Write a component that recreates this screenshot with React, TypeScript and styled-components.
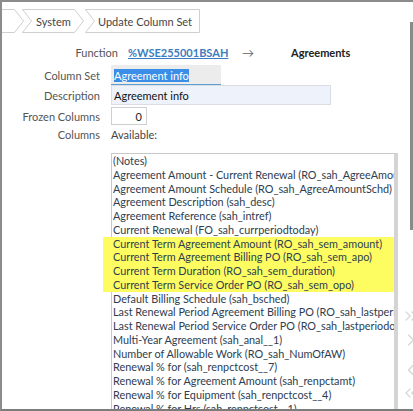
import React from "react";
import styled, { createGlobalStyle } from "styled-components";
import { ChevronRight, ChevronLeft, ChevronsRight, ChevronsLeft } from "lucide-react";

const Global = createGlobalStyle`
  html, body { margin: 0; padding: 0; background: #fff; }
  body { font-family: Lato, "Noto Sans", "Liberation Sans", sans-serif; }
`;

const Frame = styled.div`
  position: relative;
  box-sizing: border-box;
  width: 413px;
  height: 411px;
  border-top: 2px solid #8c8c8c;
  border-left: 2px solid #8c8c8c;
  border-bottom: 2px solid #7c7c7c;
  overflow: hidden;
  background: #fff;
  font-size: 11px;
`;

const PageThumb = styled.div`
  position: absolute;
  right: 0;
  top: 20px;
  width: 3px;
  height: 208px;
  background: #8a8a8a;
`;

const Crumbs = styled.nav`
  display: flex;
  height: 24px;
  margin: 7px 0 0 -10px;
`;

const Crumb = styled.div<{ $w: number; $gap: number; $pad: number }>`
  position: relative;
  flex: none;
  box-sizing: border-box;
  width: ${(p) => p.$w}px;
  margin-right: ${(p) => p.$gap}px;
  padding-left: ${(p) => p.$pad}px;
  display: flex;
  align-items: center;
  font-size: 11px;
  color: #454545;
  white-space: nowrap;
`;

const CrumbOutline = styled.svg`
  position: absolute;
  left: 0;
  top: 0;
  overflow: visible;
`;

const CrumbText = styled.span`
  position: relative;
`;

function BreadCrumb({ w, gap, pad, arrow, children }: { w: number; gap: number; pad: number; arrow: boolean; children?: React.ReactNode }) {
  const d = 9;
  const pts = arrow
    ? `0.5,0.5 ${w - d - 0.5},0.5 ${w - 0.5},12 ${w - d - 0.5},23.5 0.5,23.5 ${d + 0.5},12`
    : `0.5,0.5 ${w - 0.5},0.5 ${w - 0.5},23.5 0.5,23.5 ${d + 0.5},12`;
  return (
    <Crumb $w={w} $gap={gap} $pad={pad}>
      <CrumbOutline width={w} height={24}>
        <polygon points={pts} fill="#fff" stroke="#cfcfcf" strokeWidth="1" />
      </CrumbOutline>
      <CrumbText>{children}</CrumbText>
    </Crumb>
  );
}

const FunctionRow = styled.div`
  display: grid;
  grid-template-columns: 116px 124px 49px 1fr;
  align-items: center;
  height: 18px;
  margin-top: 10px;
  white-space: nowrap;
`;

const HeadLabel = styled.span`
  text-align: right;
  color: #555;
`;

const FnLink = styled.a`
  justify-self: start;
  margin-left: 10px;
  color: #3b7cc0;
  font-weight: 700;
  text-decoration: underline;
`;

const Arrow = styled.span`
  color: #666;
  font-size: 12px;
`;

const Target = styled.span`
  color: #222;
  font-weight: 700;
`;

const Row = styled.div<{ $h: number; $mt: number }>`
  display: grid;
  grid-template-columns: 98px 1fr;
  column-gap: 11px;
  align-items: center;
  height: ${(p) => p.$h}px;
  margin-top: ${(p) => p.$mt}px;
`;

const ListRow = styled.div`
  display: grid;
  grid-template-columns: 98px auto 1fr;
  column-gap: 11px;
  align-items: start;
  margin-top: 10px;
`;

const Label = styled.span`
  text-align: right;
  color: #555;
  white-space: nowrap;
`;

const SelectedInput = styled.div`
  box-sizing: border-box;
  width: 110px;
  height: 20px;
  background: #ececec;
  border-bottom: 1px solid #5b9fd3;
  padding: 1px 3px 0;
  display: flex;
  align-items: center;
`;

const Selection = styled.span`
  background: #3a8ee8;
  color: #fff;
  line-height: 13px;
`;

const TextInput = styled.div`
  box-sizing: border-box;
  width: 220px;
  height: 20px;
  background: #eef3fb;
  border: 1px solid #dadde2;
  padding: 0 2px;
  display: flex;
  align-items: center;
  color: #111;
`;

const NumInput = styled.div`
  box-sizing: border-box;
  width: 36px;
  height: 18px;
  background: #fff;
  border: 1px solid #cfcfcf;
  padding: 0 4px;
  display: flex;
  align-items: center;
  justify-content: flex-end;
  color: #222;
`;

const Plain = styled.span`
  color: #444;
`;

const ListBox = styled.div`
  box-sizing: border-box;
  width: 287px;
  height: 300px;
  border: 1px solid #c9c9c9;
  border-right: 4px solid #d4d4d4;
  background: #fff;
  font-size: 10.85px;
`;

const Item = styled.div`
  height: 13.78px;
  line-height: 13.78px;
  padding-left: 1px;
  white-space: nowrap;
  overflow: hidden;
  color: #2e3d4f;
`;

const Highlight = styled.div`
  margin-left: -9px;
  padding-left: 9px;
  background: #fdfd62;
`;

const Buttons = styled.div`
  display: flex;
  flex-direction: column;
  color: #d6d6d6;
  margin-left: -8px;
`;

const BtnSlot = styled.div<{ $mt: number }>`
  margin-top: ${(p) => p.$mt}px;
  height: 20px;
  display: flex;
`;

const before = [
  "(Notes)",
  "Agreement Amount - Current Renewal (RO_sah_AgreeAmountCurrRenewal)",
  "Agreement Amount Schedule (RO_sah_AgreeAmountSchd)",
  "Agreement Description (sah_desc)",
  "Agreement Reference (sah_intref)",
  "Current Renewal (FO_sah_currperiodtoday)",
];
const marked = [
  "Current Term Agreement Amount (RO_sah_sem_amount)",
  "Current Term Agreement Billing PO (RO_sah_sem_apo)",
  "Current Term Duration (RO_sah_sem_duration)",
  "Current Term Service Order PO (RO_sah_sem_opo)",
];
const after = [
  "Default Billing Schedule (sah_bsched)",
  "Last Renewal Period Agreement Billing PO (RO_sah_lastperiodapo)",
  "Last Renewal Period Service Order PO (RO_sah_lastperiodopo)",
  "Multi-Year Agreement (sah_anal__1)",
  "Number of Allowable Work (RO_sah_NumOfAW)",
  "Renewal % for (sah_renpctcost__7)",
  "Renewal % for Agreement Amount (sah_renpctamt)",
  "Renewal % for Equipment (sah_renpctcost__4)",
  "Renewal % for Hrs (sah_renpctcost__1)",
  "Renewal % for Labor (sah_renpctcost__2)",
];

export default function App() {
  return (
    <>
      <Global />
      <Frame>
        <Crumbs>
          <BreadCrumb w={32} gap={-2} pad={0} arrow />
          <BreadCrumb w={62} gap={1} pad={14} arrow>System</BreadCrumb>
          <BreadCrumb w={115} gap={0} pad={13} arrow={false}>Update Column Set</BreadCrumb>
        </Crumbs>

        <FunctionRow>
          <HeadLabel>Function</HeadLabel>
          <FnLink>%WSE255001BSAH</FnLink>
          <Arrow>→</Arrow>
          <Target>Agreements</Target>
        </FunctionRow>

        <Row $h={20} $mt={4}>
          <Label>Column Set</Label>
          <SelectedInput>
            <Selection>Agreement info</Selection>
          </SelectedInput>
        </Row>
        <Row $h={20} $mt={0}>
          <Label>Description</Label>
          <TextInput>Agreement info</TextInput>
        </Row>
        <Row $h={18} $mt={2}>
          <Label>Frozen Columns</Label>
          <NumInput>0</NumInput>
        </Row>
        <Row $h={18} $mt={0}>
          <Label>Columns</Label>
          <Plain>Available:</Plain>
        </Row>

        <ListRow>
          <span />
          <ListBox>
            {before.map((t) => (
              <Item key={t}>{t}</Item>
            ))}
            <Highlight>
              {marked.map((t) => (
                <Item key={t}>{t}</Item>
              ))}
            </Highlight>
            {after.map((t) => (
              <Item key={t}>{t}</Item>
            ))}
          </ListBox>
          <Buttons>
            <BtnSlot $mt={153}><ChevronsRight size={20} strokeWidth={1.5} /></BtnSlot>
            <BtnSlot $mt={4}><ChevronRight size={20} strokeWidth={1.5} /></BtnSlot>
            <BtnSlot $mt={10}><ChevronLeft size={20} strokeWidth={1.5} /></BtnSlot>
            <BtnSlot $mt={3}><ChevronsLeft size={20} strokeWidth={1.5} /></BtnSlot>
          </Buttons>
        </ListRow>
        <PageThumb />
      </Frame>
    </>
  );
}
